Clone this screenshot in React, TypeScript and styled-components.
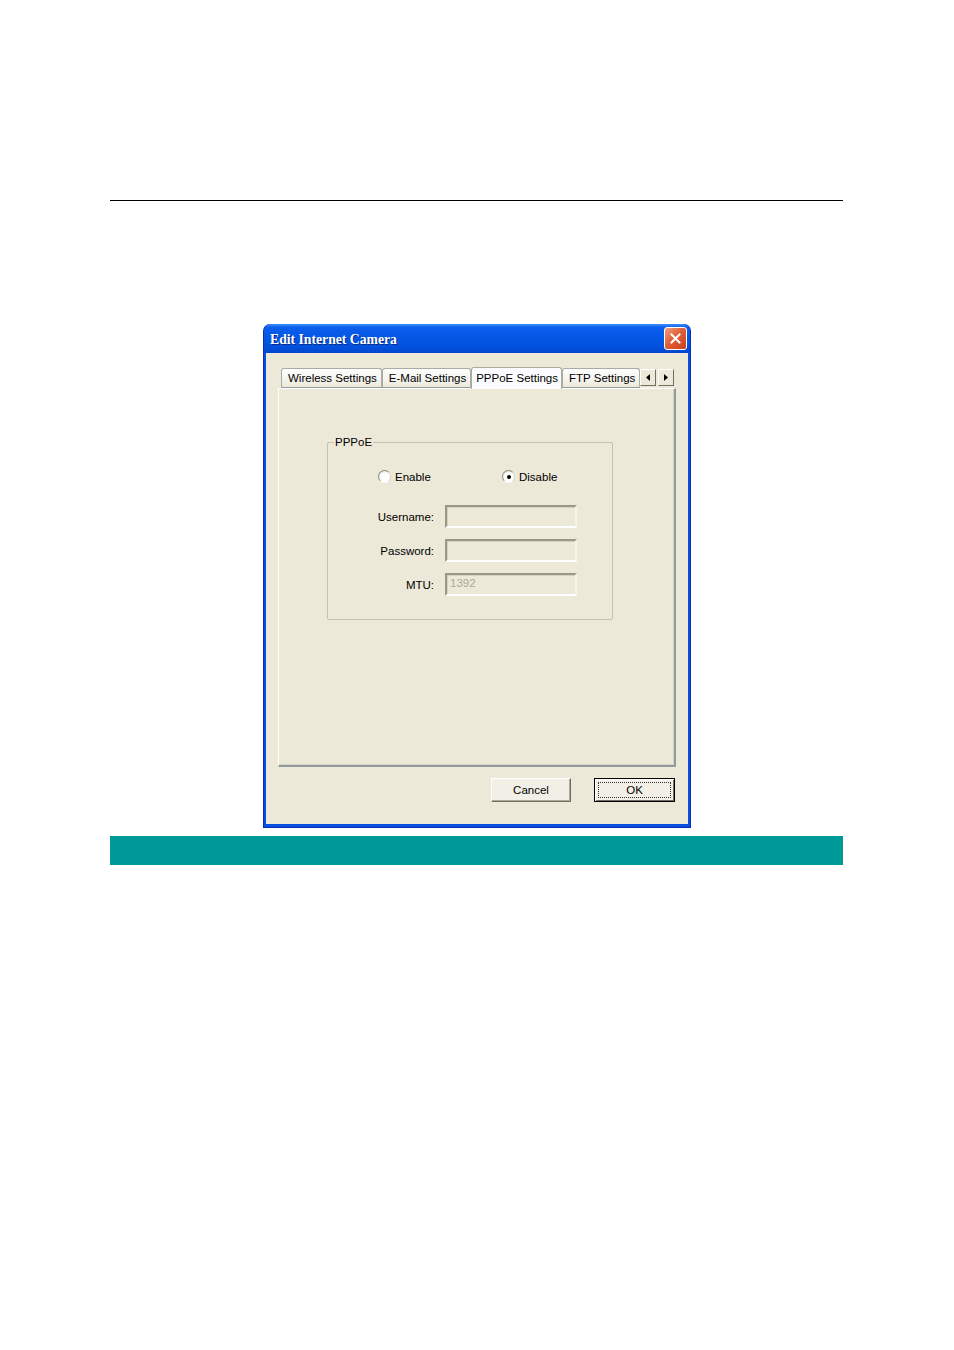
import React, { FC, ReactElement } from "react";
import styled, { createGlobalStyle } from "styled-components";

const GlobalStyle = createGlobalStyle`
  body {
    margin: 0;
    background: #ffffff;
    font-family: "Liberation Sans", Arial, sans-serif;
  }
`;

const Page = styled.div`
  width: 954px;
  height: 1350px;
  box-sizing: border-box;
  padding-top: 200px;
`;

const Rule = styled.div`
  margin-left: 110px;
  width: 733px;
  border-top: 1px solid #000000;
`;

const Window = styled.div`
  margin: 123px 0 0 263px;
  width: 428px;
  height: 504px;
  box-sizing: border-box;
  display: flex;
  flex-direction: column;
  background: #0a4fdc;
  border-radius: 7px 7px 0 0;
  border: 1px solid #0831b8;
  border-top: none;
`;

const TitleBar = styled.div`
  height: 29px;
  flex: none;
  display: flex;
  align-items: center;
  justify-content: space-between;
  padding: 0 3px 0 6px;
  border-radius: 7px 7px 0 0;
  background: linear-gradient(
    #3d8ef7 0%,
    #0b5fec 12%,
    #0357e4 45%,
    #0250dc 80%,
    #0047d0 100%
  );
`;

const Title = styled.div`
  font-family: "Liberation Serif", "Times New Roman", serif;
  font-weight: bold;
  font-size: 13.7px;
  color: #ffffff;
  text-shadow: 1px 1px 0 #0a2b8a;
  padding-top: 2px;
`;

const CloseButton = styled.div`
  width: 23px;
  height: 23px;
  box-sizing: border-box;
  border: 1px solid #ffffff;
  border-radius: 3px;
  background: linear-gradient(135deg, #f0a080 0%, #e0603a 45%, #c8401e 100%);
  display: flex;
  align-items: center;
  justify-content: center;
`;

const Body = styled.div`
  flex: 1;
  margin: 0 2px 3px;
  background: #ece9d8;
  padding: 15px 12px 0;
  display: flex;
  flex-direction: column;
`;

const TabStrip = styled.div`
  height: 20px;
  display: flex;
  align-items: flex-end;
  padding-left: 3px;
  position: relative;
  z-index: 1;
`;

const Tab = styled.div<{ active?: boolean }>`
  height: ${(p) => (p.active ? "22px" : "20px")};
  box-sizing: border-box;
  margin: ${(p) => (p.active ? "0 0 -1px 0" : "0")};
  padding: ${(p) => (p.active ? "0 3px 1px 4px" : "0 4px 0 6px")};
  display: flex;
  align-items: center;
  font-size: 11.5px;
  color: #000000;
  white-space: nowrap;
  background: ${(p) =>
    p.active ? "#fcfcfe" : "linear-gradient(#fefefe, #f4f3ee 60%, #ece9d8)"};
  border: 1px solid #a9aca0;
  border-bottom: ${(p) => (p.active ? "none" : "1px solid #919b9c")};
  border-radius: 3px 3px 0 0;
  & + & {
    border-left: ${(p) => (p.active ? "1px solid #a9aca0" : "none")};
  }
`;

const TabArrows = styled.div`
  display: flex;
  gap: 2px;
  margin-left: 0;
  align-self: flex-start;
  margin-top: 1px;
`;

const ArrowButton = styled.div`
  width: 16px;
  height: 17px;
  box-sizing: border-box;
  background: #ece9d8;
  border: 1px solid;
  border-color: #ffffff #716f64 #716f64 #ffffff;
  display: flex;
  align-items: center;
  justify-content: center;
`;

const Panel = styled.div`
  height: 379px;
  box-sizing: border-box;
  background: #ece9d8;
  border: 1px solid #919b9c;
  border-right: 2px solid #919b9c;
  border-bottom: 2px solid #919b9c;
  border-left-color: #ffffff;
  border-top-color: #ffffff;
  padding-top: 46px;
  box-shadow: inset -1px -1px 0 #d6d3c6;
`;

const GroupBox = styled.fieldset`
  margin: 0 0 0 48px;
  width: 286px;
  height: 185px;
  box-sizing: border-box;
  border: 1px solid #c5c2b2;
  border-radius: 2px;
  padding: 0;
`;

const Legend = styled.legend`
  font-size: 11.5px;
  line-height: 14px;
  margin-left: 6px;
  padding: 0 1px;
  color: #000000;
`;

const RadioRow = styled.div`
  display: grid;
  grid-template-columns: 124px auto;
  padding-left: 50px;
  margin-top: 21px;
`;

const RadioLabel = styled.label`
  display: flex;
  align-items: center;
  gap: 4px;
  font-size: 11.5px;
  color: #000000;
`;

const RadioCircle = styled.span<{ checked?: boolean }>`
  width: 13px;
  height: 13px;
  box-sizing: border-box;
  border-radius: 50%;
  border: 1px solid;
  border-color: #8a8a84 #d8d6cc #ffffff #8a8a84;
  background: radial-gradient(circle at 60% 60%, #ffffff 40%, #e4e2d8 100%);
  display: flex;
  align-items: center;
  justify-content: center;
  &::after {
    content: "";
    width: 4px;
    height: 4px;
    border-radius: 50%;
    background: ${(p) => (p.checked ? "#000000" : "transparent")};
  }
`;

const Form = styled.div`
  display: grid;
  grid-template-columns: 106px 132px;
  column-gap: 11px;
  row-gap: 11px;
  margin-top: 22px;
`;

const FieldLabel = styled.div`
  font-size: 11.5px;
  color: #000000;
  text-align: right;
  align-self: center;
`;

const TextBox = styled.div`
  height: 23px;
  box-sizing: border-box;
  border: 2px solid;
  border-color: #9b9888 #f4f3ee #ffffff #9b9888;
  box-shadow: inset 1px 1px 0 #d4d0c0;
  background: #ece9d8;
  font-size: 11.5px;
  color: #aca899;
  padding: 2px 3px;
`;

const ButtonRow = styled.div`
  display: flex;
  justify-content: flex-end;
  gap: 23px;
  margin-top: 11px;
  padding-right: 1px;
`;

const Button = styled.div<{ primary?: boolean }>`
  width: ${(p) => (p.primary ? "81px" : "80px")};
  height: 24px;
  box-sizing: border-box;
  display: flex;
  align-items: center;
  justify-content: center;
  font-size: 11.5px;
  color: #000000;
  background: #f2f0e6;
  border: 1px solid;
  border-color: ${(p) =>
    p.primary ? "#000000" : "#ffffff #716f64 #716f64 #ffffff"};
  box-shadow: ${(p) =>
    p.primary
      ? "inset 1px 1px 0 #ffffff, inset -1px -1px 0 #716f64"
      : "inset -1px -1px 0 #aca899"};
  position: relative;
  &::after {
    content: "";
    display: ${(p) => (p.primary ? "block" : "none")};
    position: absolute;
    inset: 3px;
    border: 1px dotted #333333;
  }
`;

const Teal = styled.div`
  margin: 8px 0 0 110px;
  width: 733px;
  height: 29px;
  background: #009a98;
`;

const App: FC = (): ReactElement => {
  return (
    <Page>
      <GlobalStyle />
      <Rule />
      <Window>
        <TitleBar>
          <Title>Edit Internet Camera</Title>
          <CloseButton>
            <svg width="11" height="11" viewBox="0 0 11 11">
              <path
                d="M1.5 1.5 L9.5 9.5 M9.5 1.5 L1.5 9.5"
                stroke="#ffffff"
                strokeWidth="2"
                strokeLinecap="square"
              />
            </svg>
          </CloseButton>
        </TitleBar>
        <Body>
          <TabStrip>
            <Tab>Wireless Settings</Tab>
            <Tab>E-Mail Settings</Tab>
            <Tab active>PPPoE Settings</Tab>
            <Tab>FTP Settings</Tab>
            <TabArrows>
              <ArrowButton>
                <svg width="4" height="7" viewBox="0 0 4 7">
                  <path d="M4 0 L0 3.5 L4 7 Z" fill="#000000" />
                </svg>
              </ArrowButton>
              <ArrowButton>
                <svg width="4" height="7" viewBox="0 0 4 7">
                  <path d="M0 0 L4 3.5 L0 7 Z" fill="#000000" />
                </svg>
              </ArrowButton>
            </TabArrows>
          </TabStrip>
          <Panel>
            <GroupBox>
              <Legend>PPPoE</Legend>
              <RadioRow>
                <RadioLabel>
                  <RadioCircle />
                  Enable
                </RadioLabel>
                <RadioLabel>
                  <RadioCircle checked />
                  Disable
                </RadioLabel>
              </RadioRow>
              <Form>
                <FieldLabel>Username:</FieldLabel>
                <TextBox />
                <FieldLabel>Password:</FieldLabel>
                <TextBox />
                <FieldLabel>MTU:</FieldLabel>
                <TextBox>1392</TextBox>
              </Form>
            </GroupBox>
          </Panel>
          <ButtonRow>
            <Button>Cancel</Button>
            <Button primary>OK</Button>
          </ButtonRow>
        </Body>
      </Window>
      <Teal />
    </Page>
  );
};

export default App;
